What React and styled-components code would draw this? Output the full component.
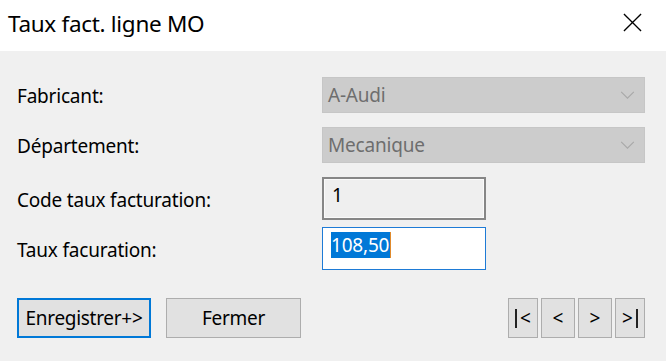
import styled, { createGlobalStyle } from "styled-components";

const Global = createGlobalStyle`
  html, body {
    margin: 0;
    padding: 0;
    background: #f0f0f0;
  }
  body {
    font-family: "Noto Sans", "Open Sans", sans-serif;
    color: #000;
  }
`;

const App = () => {
  return (
    <Window>
      <Global />
      <TitleBar>
        <Title>Taux fact. ligne MO</Title>
        <CloseIcon viewBox="0 0 20 20">
          <path d="M1 1 L19 19 M19 1 L1 19" stroke="#000" strokeWidth="1.4" fill="none" />
        </CloseIcon>
      </TitleBar>

      <Body>
        <Row>
          <Label>Fabricant:</Label>
          <Select>
            <span>A-Audi</span>
            <Chevron />
          </Select>
        </Row>
        <Row>
          <Label>Département:</Label>
          <Select>
            <span>Mecanique</span>
            <Chevron />
          </Select>
        </Row>
        <Row $tall>
          <Label>Code taux facturation:</Label>
          <TextBox>1</TextBox>
        </Row>
        <Row $tall $close>
          <Label>Taux facuration:</Label>
          <TextBox $focused>
            <Selected>108,50</Selected>
          </TextBox>
        </Row>

        <Footer>
          <Actions>
            <Button $width={134} $primary>Enregistrer+&gt;</Button>
            <Button $width={135}>Fermer</Button>
          </Actions>
          <Nav>
            <NavButton>
              <Bar />&lt;
            </NavButton>
            <NavButton $width={34}>&lt;</NavButton>
            <NavButton $width={34}>&gt;</NavButton>
            <NavButton>
              &gt;<Bar />
            </NavButton>
          </Nav>
        </Footer>
      </Body>
    </Window>
  );
};

const Chevron = () => (
  <ChevronIcon viewBox="0 0 16 10">
    <path d="M1 1 L8 8 L15 1" stroke="#a8a8a8" strokeWidth="1.2" fill="none" />
  </ChevronIcon>
);

export default App;

const Window = styled.div`
  width: 666px;
  height: 361px;
  display: flex;
  flex-direction: column;
  background: #f0f0f0;
  overflow: hidden;
`;

const TitleBar = styled.div`
  height: 51px;
  background: #fff;
  display: flex;
  align-items: center;
  justify-content: space-between;
  padding: 0 24px 0 8px;
  box-sizing: border-box;
`;

const Title = styled.div`
  font-size: 22.5px;
  margin-top: -5px;
  letter-spacing: -0.3px;
`;

const CloseIcon = styled.svg`
  width: 19px;
  height: 19px;
  margin-top: -6px;
`;

const Body = styled.div`
  display: flex;
  flex-direction: column;
  padding: 26px 21px 0 17px;
`;

const Row = styled.div`
  display: flex;
  align-items: center;
  height: ${(p) => (p.$tall ? 43 : 36)}px;
  margin-bottom: ${(p) => (p.$close ? 0 : 14)}px;
  margin-top: ${(p) => (p.$close ? -7 : 0)}px;
`;

const Label = styled.div`
  width: 305px;
  font-size: 19px;
  letter-spacing: -0.2px;
  padding-top: 2px;
`;

const Select = styled.div`
  flex: 1;
  height: 36px;
  box-sizing: border-box;
  background: #cccccc;
  border: 1px solid #c6c6c6;
  display: flex;
  align-items: center;
  justify-content: space-between;
  padding: 0 9px 0 5px;
  font-size: 19px;
  letter-spacing: -0.2px;
  color: #6e6e6e;
`;

const ChevronIcon = styled.svg`
  width: 15px;
  height: 9px;
`;

const TextBox = styled.div`
  width: 164px;
  height: 43px;
  box-sizing: border-box;
  border: ${(p) => (p.$focused ? "1px solid #1e7bd6" : "2px solid #868686")};
  box-shadow: ${(p) => (p.$focused ? "none" : "inset 0 0 0 1px #fafafa")};
  background: ${(p) => (p.$focused ? "#fff" : "#efefef")};
  padding: ${(p) => (p.$focused ? "5px 0 0 8px" : "4px 0 0 8px")};
  font-size: 19px;
  line-height: 24px;
  letter-spacing: -0.2px;
`;

const Selected = styled.span`
  background: #0078d7;
  color: #fff;
  padding-right: 1px;
  border-right: 1px solid #e08a2c;
`;

const Footer = styled.div`
  display: flex;
  justify-content: space-between;
  margin-top: 28px;
`;

const Actions = styled.div`
  display: flex;
  gap: 15px;
`;

const Button = styled.div`
  width: ${(p) => p.$width}px;
  height: 40px;
  box-sizing: border-box;
  background: #e1e1e1;
  border: ${(p) => (p.$primary ? "2px solid #0078d7" : "1px solid #adadad")};
  display: flex;
  align-items: center;
  justify-content: center;
  font-size: 19px;
  letter-spacing: -0.3px;
  white-space: nowrap;
`;

const Nav = styled.div`
  display: flex;
  gap: 3px;
`;

const NavButton = styled.div`
  width: ${(p) => p.$width || 30}px;
  height: 40px;
  box-sizing: border-box;
  background: #e1e1e1;
  border: 1px solid #adadad;
  display: flex;
  align-items: center;
  justify-content: center;
  gap: 3px;
  font-size: 19px;
`;

const Bar = styled.span`
  display: inline-block;
  width: 2px;
  height: 19px;
  background: #222;
`;
